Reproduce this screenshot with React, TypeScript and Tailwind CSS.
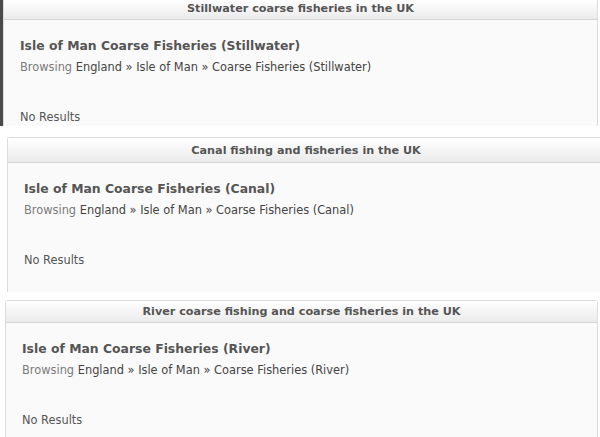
type PanelProps = {
  heading: string;
  kind: string;
  headerClass: string;
  className: string;
  strip?: boolean;
};

const font = { fontFamily: '"DejaVu Sans", Verdana, sans-serif' };

function Panel({ heading, kind, headerClass, className, strip }: PanelProps) {
  return (
    <div className={`flex shrink-0 overflow-hidden ${className}`}>
      {strip && <div className="w-[3px] shrink-0 bg-[#4a4a4a]" />}
      <div className="flex-1 border border-[#dcdcdc] bg-[#fafafa]">
        <div
          className={`flex items-center justify-center border-b border-[#d6d6d6] bg-gradient-to-b from-white to-[#ebebeb] text-[11.2px] font-bold text-[#555] ${headerClass}`}
        >
          {heading}
        </div>
        <div className="px-4 pt-[18px] pb-6">
          <div className="text-[12.4px] font-bold leading-4 text-[#555]">
            Isle of Man Coarse Fisheries ({kind})
          </div>
          <div className="mt-[5px] text-[11.4px] leading-4 text-[#444]">
            <span className="text-[#7a7a7a]">Browsing</span> England » Isle of Man » Coarse Fisheries ({kind})
          </div>
          <div className="mt-[34px] text-[11.4px] leading-4 text-[#555]">No Results</div>
        </div>
      </div>
    </div>
  );
}

export default function App() {
  return (
    <div className="flex h-[437px] w-[600px] flex-col overflow-hidden bg-white" style={font}>
      <Panel
        heading="Stillwater coarse fisheries in the UK"
        kind="Stillwater"
        headerClass="h-[20px]"
        className="ml-0 mr-[2px] h-[126px] [&>div:last-child]:border-t-0 [&>div:last-child]:border-b-0"
        strip
      />
      <Panel
        heading="Canal fishing and fisheries in the UK"
        kind="Canal"
        headerClass="h-[25px] pt-[3px]"
        className="ml-[7px] mt-[11px] h-[155px] w-[598px] [&>div]:rounded-tl-[3px] [&>div]:border-b-0"
      />
      <Panel
        heading="River coarse fishing and coarse fisheries in the UK"
        kind="River"
        headerClass="h-[22px] pt-[1px]"
        className="ml-[5px] mr-[2px] mt-[8px] [&>div]:rounded-t-[3px]"
      />
    </div>
  );
}
